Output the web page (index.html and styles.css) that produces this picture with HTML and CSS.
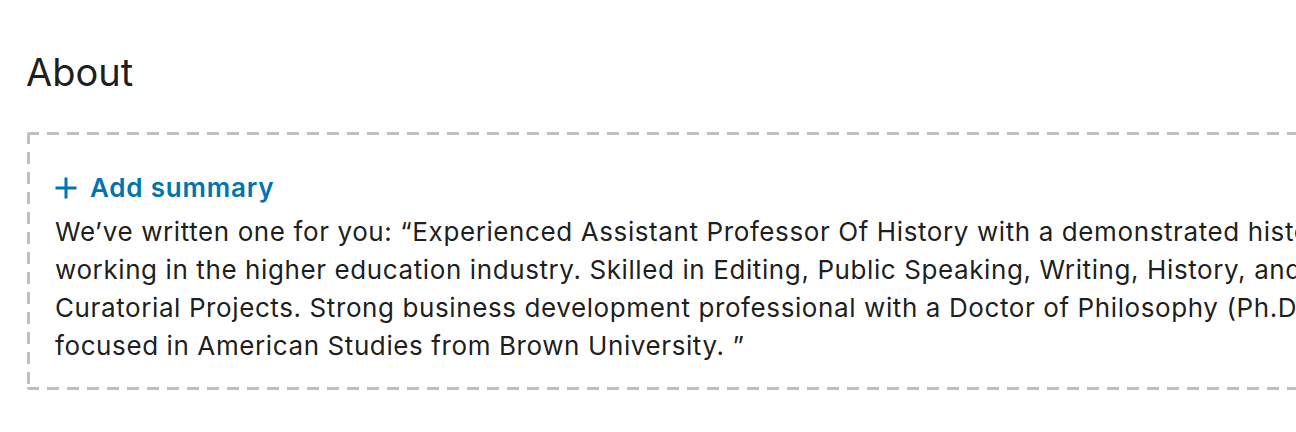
FILE: index.html
```html
<!DOCTYPE html>
<html lang="en">
<head>
<meta charset="utf-8">
<title>About</title>
<link rel="stylesheet" href="styles.css">
</head>
<body>
<section class="about">
  <h2 class="about-title">About</h2>
  <div class="summary-box">
    <a class="add-summary" href="#">
      <svg class="plus-icon" viewBox="0 0 22 22" width="22" height="22" aria-hidden="true">
        <path d="M11 0.5v21M0.5 11h21" stroke="currentColor" stroke-width="3" fill="none"/>
      </svg>
      <span>Add summary</span>
    </a>
    <p class="summary-text">We’ve written one for you: “Experienced Assistant Professor Of History with a demonstrated history of working in the higher education industry. Skilled in Editing, Public Speaking, Writing, History, and Curatorial Projects. Strong business development professional with a Doctor of Philosophy (Ph.D.) focused in American Studies from Brown University. ”</p>
  </div>
</section>
</body>
</html>
```
FILE: styles.css
```css
html, body {
  margin: 0;
  padding: 0;
  background: #ffffff;
  overflow: hidden;
}

body {
  font-family: Inter, "Noto Sans", "Liberation Sans", sans-serif;
  color: rgba(0, 0, 0, 0.9);
  width: 1296px;
  height: 432px;
}

.about {
  width: 1500px;
  padding: 47px 0 0 26px;
}

.about-title {
  margin: 0;
  font-size: 38px;
  font-weight: 400;
  line-height: 50px;
}

.summary-box {
  margin-top: 35px;
  margin-left: 1px;
  width: 1420px;
  height: 258px;
  box-sizing: border-box;
  padding: 39px 24px 0 28px;
  border-radius: 2px;
  background:
    linear-gradient(to right, #bfbfbf 12px, transparent 12px) left top / 20px 3px repeat-x,
    linear-gradient(to right, #bfbfbf 12px, transparent 12px) left bottom / 20px 3px repeat-x,
    linear-gradient(to bottom, #bfbfbf 12px, transparent 12px) left top / 3px 20px repeat-y,
    linear-gradient(to bottom, #bfbfbf 12px, transparent 12px) right top / 3px 20px repeat-y;
}

.add-summary {
  display: flex;
  align-items: center;
  gap: 13px;
  color: #0073b1;
  text-decoration: none;
  font-weight: 600;
  font-size: 26px;
  line-height: 34px;
  letter-spacing: 0.8px;
}

.plus-icon {
  display: block;
  flex: none;
}

.summary-text {
  margin: 8px 0 0;
  width: 1335px;
  font-size: 26px;
  line-height: 38px;
  letter-spacing: 0.6px;
}
```
